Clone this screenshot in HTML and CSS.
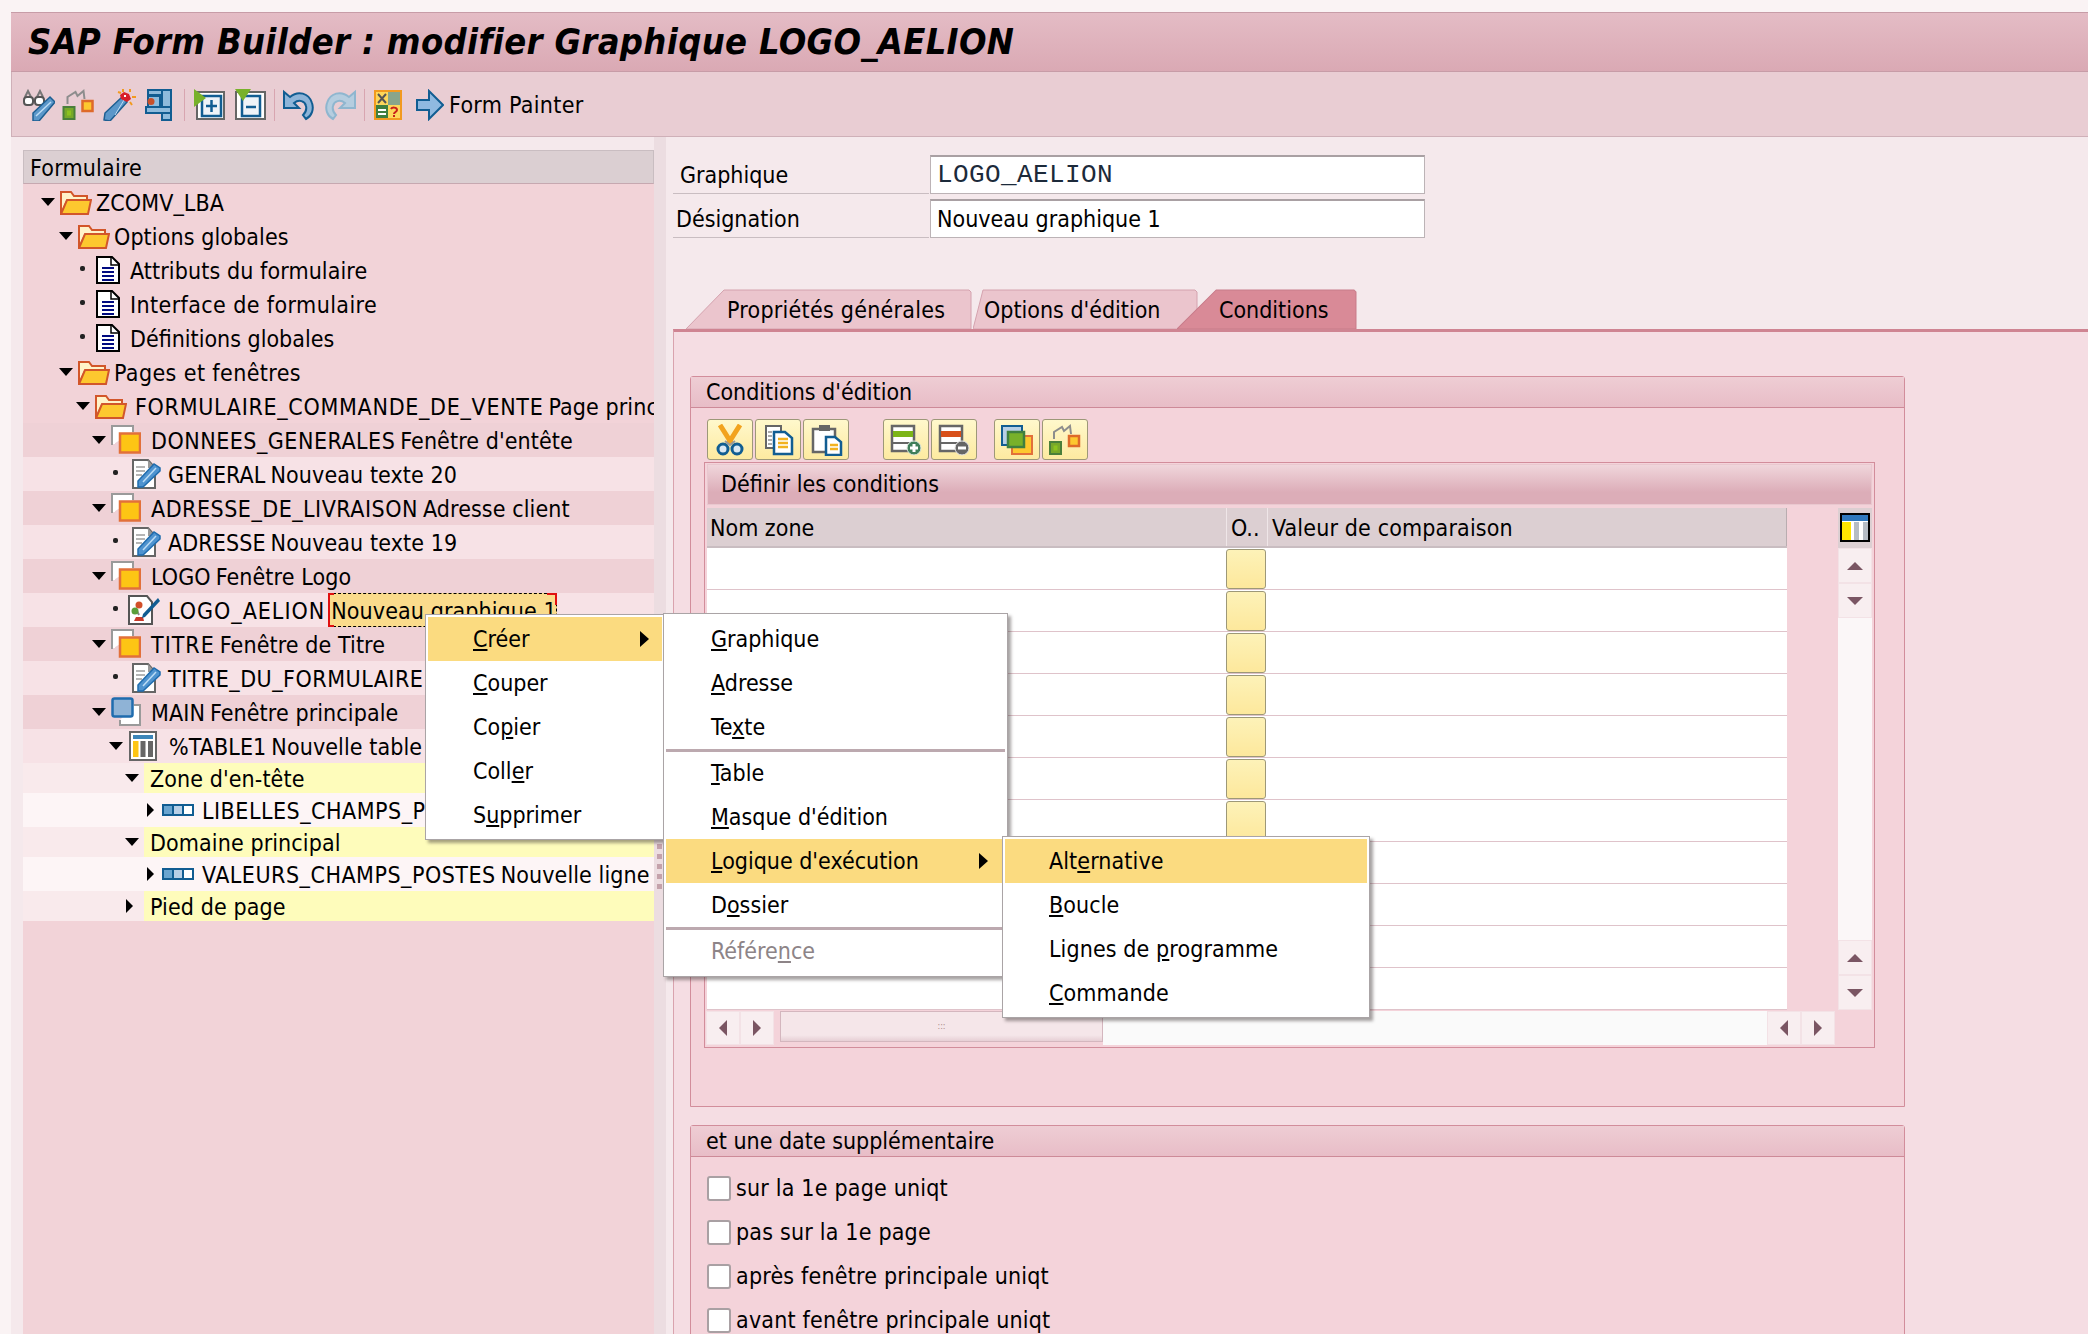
FILE: index.html
```html
<!DOCTYPE html>
<html lang="fr">
<head>
    <meta charset="UTF-8">
    <title>SAP Form Builder</title>
    <link rel="stylesheet" href="styles.css">
</head>
<body>
<svg class="defs" width="0" height="0">
    <defs>
        <symbol id="folder" viewBox="0 0 32 25">
            <path d="M1 24V2h10l3 4h13v5H7L1 24z" fill="#fff3c8" stroke="#d2562a" stroke-width="2"/>
            <path d="M1 24L7 10h24l-3 14z" fill="#fdc82f" stroke="#d2562a" stroke-width="2"/>
        </symbol>
        <symbol id="doc" viewBox="0 0 24 28">
            <path d="M1 1h15l7 7v19H1z" fill="#fff" stroke="#000" stroke-width="2"/>
            <path d="M15 1v8h8" fill="none" stroke="#000" stroke-width="1.5"/>
            <path d="M6 12h12M6 16h12M6 20h12M6 24h12" stroke="#000a80" stroke-width="2"/>
        </symbol>
        <symbol id="win" viewBox="0 0 30 30">
            <path d="M1 20V1h21v6" fill="#fff" stroke="#9a9a9a" stroke-width="2"/>
            <path d="M3 19V3h17v4" fill="none" stroke="#fff" stroke-width="2"/>
            <rect x="9" y="8.500" width="20" height="19" fill="#fdc514" stroke="#e2703a" stroke-width="2.500"/>
        </symbol>
        <symbol id="main" viewBox="0 0 30 30">
            <path d="M9 23v5h20V8h-6" fill="#fff" stroke="#9a9a9a" stroke-width="2"/>
            <rect x="1.500" y="1.500" width="20" height="18" rx="2" fill="#8fb3d6" stroke="#1f6cae" stroke-width="2.500"/>
        </symbol>
        <symbol id="pen" viewBox="0 0 29 30">
            <path d="M1 1h15l7 8v20H1z" fill="#fff" stroke="#666" stroke-width="2"/>
            <path d="M16 1v8h7z" fill="#999"/>
            <path d="M4 8h9M4 12h9M4 16h6" stroke="#b5b5b5" stroke-width="2"/>
            <path d="M6 28v-6L22 5l6 4v3L11 28z" fill="#4f93cf" stroke="#1f6cae" stroke-width="1.500"/>
            <path d="M11 23L24 9" stroke="#bcdcf5" stroke-width="1.500"/>
        </symbol>
        <symbol id="graph" viewBox="0 0 32 30">
            <path d="M1 1h18l5 6v22H1z" fill="#fff" stroke="#555" stroke-width="2"/>
            <circle cx="11" cy="10" r="3.500" fill="#d2502a"/>
            <path d="M8 14l3 6" stroke="#888" stroke-width="2"/>
            <circle cx="7" cy="16" r="3.500" fill="#5a9e3a"/>
            <path d="M6 26l2-4h7l1 4z" fill="#c83a2a"/>
            <path d="M14 23l1-4L30 3l2 3-15 16z" fill="#115d92"/>
        </symbol>
        <symbol id="table" viewBox="0 0 28 30">
            <rect x="1" y="1" width="26" height="28" fill="#fff" stroke="#666" stroke-width="2"/>
            <rect x="4" y="4" width="20" height="4" fill="#3c85b8"/>
            <rect x="4" y="10" width="5.500" height="16" fill="#fdc514"/>
            <rect x="11.500" y="10" width="5" height="16" fill="#666"/>
            <rect x="19" y="10" width="5" height="16" fill="#666"/>
        </symbol>
        <symbol id="line" viewBox="0 0 32 12">
            <rect x="1" y="1" width="30" height="10" fill="#fff" stroke="#115d92" stroke-width="2"/>
            <rect x="2" y="2" width="9" height="8" fill="#6aa5d0"/>
            <rect x="12" y="2" width="8" height="8" fill="#b8cfe6"/>
            <path d="M11 1v10M21 1v10" stroke="#115d92" stroke-width="2"/>
        </symbol>
        <symbol id="hier" viewBox="0 0 32 32">
            <rect x="1" y="18" width="11" height="12" fill="#78a82a" stroke="#4a7f3a" stroke-width="2"/>
            <rect x="4.500" y="21.500" width="4" height="5" fill="#8cc21f"/>
            <rect x="20" y="12" width="10" height="10" fill="#fdc82f" stroke="#de6a2a" stroke-width="2.500"/>
            <path d="M5 15V8l8-5 2 4 6-5 1 8" fill="none" stroke="#8d8d8d" stroke-width="2"/>
        </symbol>
    </defs>
</svg>

<div class="page">
    <div class="title">SAP Form Builder : modifier Graphique LOGO_AELION</div>

    <div class="appbar">
        <svg class="tb t33" viewBox="0 0 33 32">
            <path d="M3 8l3-6 3 6M15 8l3-6 3 6" fill="none" stroke="#777" stroke-width="2"/>
            <rect x="2" y="8" width="9" height="8" rx="3" fill="#fff" stroke="#555" stroke-width="2"/>
            <rect x="13" y="8" width="9" height="8" rx="3" fill="#fff" stroke="#555" stroke-width="2"/>
            <path d="M11 32v-8L28 8l5 5-16 19z" fill="#5b97c9" stroke="#1d5f92" stroke-width="1.500"/>
            <path d="M14 27L29 13" stroke="#bcdcf5" stroke-width="1.500"/>
        </svg>
        <svg class="tb t33 g6"><use href="#hier"/></svg>
        <svg class="tb t33 g9" viewBox="0 0 33 32">
            <path d="M1 31l1-7L19 8l5 5L7 32z" fill="#5b97c9" stroke="#1d5f92" stroke-width="1.500"/>
            <path d="M12 26L21 11" stroke="#bcdcf5" stroke-width="1"/>
            <path d="M21 3l5 2 2 5-4 3-6-3-1-4z" fill="#d8202a"/>
            <rect x="21" y="6" width="2" height="2" fill="#fff"/>
            <path d="M20 0v3M27 0v3M33 8h-4M27 13l2 3M15 3l3 1" stroke="#f29a1f" stroke-width="2"/>
        </svg>
        <svg class="tb t28 g10" viewBox="0 0 28 32">
            <rect x="3" y="1" width="23" height="5" fill="#8ebbdc" stroke="#115d92" stroke-width="2"/>
            <rect x="3" y="7" width="12" height="11" fill="#8ebbdc" stroke="#115d92" stroke-width="2"/>
            <rect x="17" y="1" width="9" height="30" fill="#8ebbdc" stroke="#115d92" stroke-width="2"/>
            <rect x="1" y="18" width="25" height="6" fill="#8ebbdc" stroke="#115d92" stroke-width="2"/>
            <circle cx="6" cy="12.500" r="3.500" fill="#c8502a"/>
        </svg>
        <span class="sep first"></span>
        <svg class="tb t31" viewBox="0 0 31 32">
            <rect x="3" y="3" width="27" height="27" fill="#fff" stroke="#666" stroke-width="2"/>
            <rect x="8" y="7" width="19" height="20" fill="#eef3f8" stroke="#115d92" stroke-width="2.500"/>
            <path d="M17.500 11v12M12 17h11" stroke="#115d92" stroke-width="2.500"/>
            <path d="M0 0l12 9-12 9z" fill="#78b12a"/>
        </svg>
        <svg class="tb t31 g10b" viewBox="0 0 31 32">
            <rect x="1" y="3" width="29" height="27" fill="#fff" stroke="#666" stroke-width="2"/>
            <rect x="7" y="7" width="18" height="20" fill="#eef3f8" stroke="#115d92" stroke-width="2.500"/>
            <path d="M11 18h10" stroke="#115d92" stroke-width="2.500"/>
            <path d="M0 0h16l-8 12z" fill="#78b12a"/>
        </svg>
        <span class="sep"></span>
        <svg class="tb t31" viewBox="0 0 31 32">
            <path d="M1 3v16h15l-5-5c5-4 11-2 12 3 1 4-1 7-3 9l3 4c6-3 8-10 6-16C26 4 15 1 7 8z" fill="#8db4d8" stroke="#115d92" stroke-width="2"/>
        </svg>
        <svg class="tb t31 g12" viewBox="0 0 31 32">
            <path d="M30 3v16H15l5-5c-5-4-11-2-12 3-1 4 1 7 3 9l-3 4C2 27 0 20 2 14 5 4 16 1 24 8z" fill="#b5cddf" stroke="#8fb6cf" stroke-width="2"/>
        </svg>
        <span class="sep"></span>
        <svg class="tb t30" viewBox="0 0 30 32">
            <rect x="1" y="1" width="28" height="30" fill="#f29a1f"/>
            <rect x="3" y="3" width="12" height="13" fill="#fdd75a"/>
            <rect x="15" y="3" width="12" height="13" fill="#88a58a"/>
            <rect x="3" y="16" width="12" height="13" fill="#3f7f3f"/>
            <rect x="15" y="16" width="12" height="13" fill="#fdd75a"/>
            <path d="M5 5l8 9M13 5l-8 9" stroke="#555" stroke-width="2"/>
            <path d="M5 21h8M5 25h8" stroke="#fff" stroke-width="2"/>
            <path d="M18 20c1-2 6-2 6 1 0 2-3 2-3 4M21 26v2" fill="none" stroke="#c8201a" stroke-width="2"/>
        </svg>
        <svg class="tb t28 g14" viewBox="0 0 28 32">
            <path d="M1 11h12V2l14 14-14 14v-9H1z" fill="#8fb9e0" stroke="#115d92" stroke-width="2"/>
        </svg>
        <span class="fp">Form Painter</span>
    </div>

    <div class="main">
        <div class="treecol">
            <div class="treehead">Formulaire</div>
            <div class="tree">
                <div class="row l0"><i class="tw down"></i><svg class="ic folder"><use href="#folder"/></svg><span>ZCOMV_LBA</span></div>
                <div class="row l1"><i class="tw down"></i><svg class="ic folder"><use href="#folder"/></svg><span>Options globales</span></div>
                <div class="row l2"><i class="tw dot"></i><svg class="ic doc"><use href="#doc"/></svg><span>Attributs du formulaire</span></div>
                <div class="row l2"><i class="tw dot"></i><svg class="ic doc"><use href="#doc"/></svg><span class="iface">Interface de formulaire</span></div>
                <div class="row l2"><i class="tw dot"></i><svg class="ic doc"><use href="#doc"/></svg><span class="defn">Définitions globales</span></div>
                <div class="row l1"><i class="tw down"></i><svg class="ic folder"><use href="#folder"/></svg><span class="iface">Pages et fenêtres</span></div>
                <div class="row l2"><i class="tw down"></i><svg class="ic folder wide"><use href="#folder"/></svg><span class="name long">FORMULAIRE_COMMANDE_DE_VENTE</span><span class="desc">Page principale</span></div>
                <div class="row l3 dark"><i class="tw down"></i><svg class="ic win"><use href="#win"/></svg><span class="name">DONNEES_GENERALES</span><span class="desc">Fenêtre d'entête</span></div>
                <div class="row l4 light"><i class="tw dot"></i><svg class="ic pen"><use href="#pen"/></svg><span>GENERAL</span><span class="desc">Nouveau texte 20</span></div>
                <div class="row l3 dark"><i class="tw down"></i><svg class="ic win"><use href="#win"/></svg><span class="name">ADRESSE_DE_LIVRAISON</span><span class="desc">Adresse client</span></div>
                <div class="row l4 light"><i class="tw dot"></i><svg class="ic pen"><use href="#pen"/></svg><span>ADRESSE</span><span class="desc">Nouveau texte 19</span></div>
                <div class="row l3 dark"><i class="tw down"></i><svg class="ic win"><use href="#win"/></svg><span>LOGO</span><span class="desc">Fenêtre Logo</span></div>
                <div class="row l4 light"><i class="tw dot"></i><svg class="ic graph"><use href="#graph"/></svg><span class="name loose">LOGO_AELION</span><span class="sel">Nouveau graphique 1</span></div>
                <div class="row l3 dark"><i class="tw down"></i><svg class="ic win"><use href="#win"/></svg><span class="name loose">TITRE</span><span class="desc">Fenêtre de Titre</span></div>
                <div class="row l4 light"><i class="tw dot"></i><svg class="ic pen"><use href="#pen"/></svg><span class="name">TITRE_DU_FORMULAIRE</span></div>
                <div class="row l3 dark"><i class="tw down"></i><svg class="ic win"><use href="#main"/></svg><span>MAIN</span><span class="desc">Fenêtre principale</span></div>
                <div class="row l4 light"><i class="tw down"></i><svg class="ic tbl"><use href="#table"/></svg><span>%TABLE1</span><span class="desc">Nouvelle table</span></div>
                <div class="row l5 zrow"><i class="tw down"></i><div class="zone">Zone d'en-tête</div></div>
                <div class="row l6 pale"><i class="tw right"></i><svg class="ic line"><use href="#line"/></svg><span class="name">LIBELLES_CHAMPS_POSTES</span></div>
                <div class="row l5 zrow"><i class="tw down"></i><div class="zone">Domaine principal</div></div>
                <div class="row l6 pale"><i class="tw right"></i><svg class="ic line"><use href="#line"/></svg><span class="name">VALEURS_CHAMPS_POSTES</span><span class="desc">Nouvelle ligne</span></div>
                <div class="row l5 zrow"><i class="tw right"></i><div class="zone">Pied de page</div></div>
            </div>
        </div>

        <div class="splitter"><div class="grip"></div></div>

        <div class="detail">
            <div class="field first">
                <label class="lab-g">Graphique</label>
                <div class="input mono">LOGO_AELION</div>
            </div>
            <div class="field">
                <label class="lab-d">Désignation</label>
                <div class="input">Nouveau graphique 1</div>
            </div>

            <div class="tabs">
                <div class="tab t1">
                    <svg viewBox="0 0 286 40" preserveAspectRatio="none"><polygon points="0,40 38,1 283,1 285,3 285,40" fill="#ebc5cd" stroke="#d4a2ae"/></svg>
                    <span>Propriétés générales</span>
                </div>
                <div class="tab t2">
                    <svg viewBox="0 0 225 40" preserveAspectRatio="none"><polygon points="0,40 10,1 222,1 224,3 224,40" fill="#ebc5cd" stroke="#d4a2ae"/></svg>
                    <span>Options d'édition</span>
                </div>
                <div class="tab t3">
                    <svg viewBox="0 0 179 40" preserveAspectRatio="none"><polygon points="0,40 39,1 176,1 178,3 178,40" fill="#d98a97" stroke="#c87c8a"/></svg>
                    <span>Conditions</span>
                </div>
            </div>

            <div class="panel">
                <div class="group g1">
                    <div class="grouphead">Conditions d'édition</div>
                    <div class="groupbody">
                        <div class="btnbar">
                            <button class="btn">
                                <svg viewBox="0 0 34 32">
                                    <path d="M7 1l12 19M27 1L15 20" stroke="#f2a31f" stroke-width="5"/>
                                    <path d="M12 17l5 4 5-4" fill="none" stroke="#9a9a9a" stroke-width="2"/>
                                    <circle cx="10" cy="25" r="5" fill="#dbe8f3" stroke="#115d92" stroke-width="3"/>
                                    <circle cx="24" cy="25" r="5" fill="#dbe8f3" stroke="#115d92" stroke-width="3"/>
                                </svg>
                            </button>
                            <button class="btn">
                                <svg viewBox="0 0 34 32">
                                    <rect x="5" y="2" width="15" height="22" fill="#fff" stroke="#666" stroke-width="2"/>
                                    <path d="M7 8h4M7 12h4M7 16h4M7 20h4" stroke="#aaa" stroke-width="2"/>
                                    <path d="M13 8h11l7 6v16H13z" fill="#fff" stroke="#115d92" stroke-width="2.500"/>
                                    <path d="M17 15h10M17 19h10M17 23h10" stroke="#f2b21f" stroke-width="2.500"/>
                                </svg>
                            </button>
                            <button class="btn">
                                <svg viewBox="0 0 34 32">
                                    <rect x="4" y="5" width="22" height="23" fill="#fff" stroke="#666" stroke-width="2.500"/>
                                    <rect x="10" y="1" width="11" height="6" fill="#666"/>
                                    <path d="M17 13h9l6 5v13H17z" fill="#fff" stroke="#115d92" stroke-width="2.500"/>
                                    <path d="M21 21h8M21 25h8" stroke="#f2b21f" stroke-width="2.500"/>
                                </svg>
                            </button>
                            <button class="btn gap">
                                <svg viewBox="0 0 34 32">
                                    <rect x="3" y="2" width="22" height="25" fill="#fff" stroke="#666" stroke-width="2.500"/>
                                    <rect x="4" y="7" width="20" height="6" fill="#7cb518"/>
                                    <path d="M4 19h20" stroke="#666" stroke-width="2"/>
                                    <circle cx="25" cy="24" r="7" fill="#3f7f5a" stroke="#dfe8df" stroke-width="1"/>
                                    <path d="M25 20v8M21 24h8" stroke="#fff" stroke-width="3"/>
                                </svg>
                            </button>
                            <button class="btn">
                                <svg viewBox="0 0 34 32">
                                    <rect x="3" y="2" width="22" height="25" fill="#fff" stroke="#666" stroke-width="2.500"/>
                                    <rect x="4" y="7" width="20" height="6" fill="#d8501a"/>
                                    <path d="M4 19h20" stroke="#666" stroke-width="2"/>
                                    <circle cx="25" cy="24" r="7" fill="#666" stroke="#e6e6e6" stroke-width="1"/>
                                    <path d="M21 24h8" stroke="#fff" stroke-width="3"/>
                                </svg>
                            </button>
                            <button class="btn gap">
                                <svg viewBox="0 0 34 32">
                                    <rect x="2" y="2" width="20" height="19" fill="#b7cfe6" stroke="#115d92" stroke-width="2"/>
                                    <rect x="12" y="12" width="20" height="18" fill="#fdc82f" stroke="#e2703a" stroke-width="2"/>
                                    <rect x="8" y="8" width="16" height="15" fill="#78b12a" stroke="#3f7f3f" stroke-width="2.500"/>
                                </svg>
                            </button>
                            <button class="btn">
                                <svg viewBox="0 0 34 32"><use href="#hier"/></svg>
                            </button>
                        </div>

                        <div class="tc">
                            <div class="tctitle">Définir les conditions</div>
                            <div class="tcbody">
                                <div class="grid">
                                    <div class="gridhead">
                                        <div class="c1">Nom zone</div>
                                        <div class="c2">O..</div>
                                        <div class="c3">Valeur de comparaison</div>
                                    </div>
                                    <div class="gridrow"><div class="c1"></div><div class="c2"><b></b></div><div class="c3"></div></div>
                                    <div class="gridrow"><div class="c1"></div><div class="c2"><b></b></div><div class="c3"></div></div>
                                    <div class="gridrow"><div class="c1"></div><div class="c2"><b></b></div><div class="c3"></div></div>
                                    <div class="gridrow"><div class="c1"></div><div class="c2"><b></b></div><div class="c3"></div></div>
                                    <div class="gridrow"><div class="c1"></div><div class="c2"><b></b></div><div class="c3"></div></div>
                                    <div class="gridrow"><div class="c1"></div><div class="c2"><b></b></div><div class="c3"></div></div>
                                    <div class="gridrow"><div class="c1"></div><div class="c2"><b></b></div><div class="c3"></div></div>
                                    <div class="gridrow"><div class="c1"></div><div class="c2"></div><div class="c3"></div></div>
                                    <div class="gridrow"><div class="c1"></div><div class="c2"></div><div class="c3"></div></div>
                                    <div class="gridrow"><div class="c1"></div><div class="c2"></div><div class="c3"></div></div>
                                    <div class="gridrow"><div class="c1"></div><div class="c2"></div><div class="c3"></div></div>
                                </div>
                                <div class="vbar">
                                    <div class="colbtn">
                                        <svg viewBox="0 0 30 29">
                                            <rect x="1" y="1" width="28" height="27" fill="#fff" stroke="#000" stroke-width="2"/>
                                            <rect x="2" y="2" width="26" height="6" fill="#2f78bd"/>
                                            <rect x="2" y="9" width="9" height="18" fill="#ffe600"/>
                                            <rect x="14" y="9" width="5" height="18" fill="#b5bcc4"/>
                                            <rect x="23" y="9" width="5" height="18" fill="#b5bcc4"/>
                                        </svg>
                                    </div>
                                    <div class="sb"><i class="up"></i></div>
                                    <div class="sb"><i class="dn"></i></div>
                                    <div class="track"></div>
                                    <div class="sb"><i class="up"></i></div>
                                    <div class="sb"><i class="dn"></i></div>
                                </div>
                            </div>
                            <div class="hbar">
                                <div class="sb"><i class="lf"></i></div>
                                <div class="sb"><i class="rt"></i></div>
                                <div class="hthumb">:::</div>
                                <div class="htrack"></div>
                                <div class="sb"><i class="lf"></i></div>
                                <div class="sb"><i class="rt"></i></div>
                            </div>
                        </div>
                    </div>
                </div>

                <div class="group g2">
                    <div class="grouphead">et une date supplémentaire</div>
                    <div class="checks">
                        <div class="check"><i></i>sur la 1e page uniqt</div>
                        <div class="check"><i></i>pas sur la 1e page</div>
                        <div class="check"><i></i>après fenêtre principale uniqt</div>
                        <div class="check"><i></i>avant fenêtre principale uniqt</div>
                    </div>
                </div>
            </div>
        </div>
    </div>

    <!-- context menus -->
    <div class="menu m1">
        <div class="mi on"><span><u>C</u>réer</span><i class="more"></i></div>
        <div class="mi"><span><u>C</u>ouper</span></div>
        <div class="mi"><span>Co<u>p</u>ier</span></div>
        <div class="mi"><span>Coll<u>e</u>r</span></div>
        <div class="mi"><span>S<u>u</u>pprimer</span></div>
    </div>
    <div class="menu m2">
        <div class="mi"><span><u>G</u>raphique</span></div>
        <div class="mi"><span><u>A</u>dresse</span></div>
        <div class="mi"><span>Te<u>x</u>te</span></div>
        <div class="msep"></div>
        <div class="mi"><span><u>T</u>able</span></div>
        <div class="mi"><span><u>M</u>asque d'édition</span></div>
        <div class="mi on"><span><u>L</u>ogique d'exécution</span><i class="more"></i></div>
        <div class="mi"><span>D<u>o</u>ssier</span></div>
        <div class="msep"></div>
        <div class="mi off"><span>Référe<u>n</u>ce</span></div>
    </div>
    <div class="menu m3">
        <div class="mi on"><span>Alt<u>e</u>rnative</span></div>
        <div class="mi"><span><u>B</u>oucle</span></div>
        <div class="mi"><span>Lignes de <u>p</u>rogramme</span></div>
        <div class="mi"><span><u>C</u>ommande</span></div>
    </div>
</div>
</body>
</html>
```
FILE: styles.css
```css
html, body {
    margin: 0;
    height: 100%;
    overflow: hidden;
}
body {
    background-color: #faf3f4;
    font-family: "DejaVu Sans Condensed", "DejaVu Sans", sans-serif;
    font-size: 23px;
    color: #000;
}
.defs {
    position: absolute;
}
.page {
    position: relative;
    height: 1322px;
    padding: 12px 0 0 11px;
    overflow: hidden;
}

/* title and application toolbar */
.title {
    height: 58px;
    line-height: 58px;
    padding-left: 17px;
    background: linear-gradient(#e4bcc5, #daa9b4);
    border-top: 1px solid #c79ca7;
    border-bottom: 1px solid #c79ca7;
    font-family: "DejaVu Sans Condensed", "DejaVu Sans", sans-serif;
    font-weight: 700;
    font-style: italic;
    font-size: 36px;
    letter-spacing: 0.33px;
    white-space: nowrap;
}
.appbar {
    height: 63px;
    display: flex;
    align-items: center;
    padding: 1px 0 0 10px;
    background-color: #e9cdd3;
    border-bottom: 1px solid #cfb0b8;
    border-left: 1px solid #cfb0b8;
}
.tb {
    height: 32px;
    flex: none;
}
.t33 { width: 33px; }
.t31 { width: 31px; }
.t30 { width: 30px; }
.t28 { width: 28px; }
.g6 { margin-left: 7px; }
.g9 { margin-left: 8px; }
.g10 { margin-left: 9px; }
.g10b { margin-left: 10px; }
.g12 { margin-left: 11px; }
.g14 { margin-left: 13px; }
.sep {
    width: 1px;
    height: 32px;
    margin: 0 8px;
    background-color: #d8a5b0;
}
.sep.first {
    margin: 0 9px 0 11px;
}
.fp {
    margin-left: 5px;
    letter-spacing: 0.3px;
    white-space: nowrap;
}

.main {
    display: flex;
    height: 1197px;
    background-color: #f5e9ec;
}

/* tree */
.treecol {
    width: 631px;
    margin: 13px 0 0 12px;
    background-color: #f2d3d8;
    overflow: hidden;
    flex: none;
}
.treehead {
    height: 32px;
    line-height: 34px;
    padding-left: 6px;
    letter-spacing: 0.2px;
    background-color: #dbcfd2;
    border: 1px solid #c9bdc1;
    border-bottom-color: #c6a8b0;
}
.tree {
    padding-top: 1px;
    letter-spacing: 0.1px;
}
.row {
    height: 34px;
    display: flex;
    align-items: center;
    white-space: nowrap;
}
.row > span {
    padding-top: 2px;
}
.row .name {
    letter-spacing: 0.5px;
}
.row .name.long {
    letter-spacing: 0.7px;
}
.row .name.loose {
    letter-spacing: 1px;
}
.row .iface {
    letter-spacing: 0.4px;
}
.row .defn {
    letter-spacing: 0;
}
.l0 { padding-left: 18px; }
.l1 { padding-left: 36px; }
.l2 { padding-left: 53px; }
.l3 { padding-left: 69px; }
.l4 { padding-left: 86px; }
.l5 { padding-left: 102px; }
.l6 { padding-left: 123px; }
.dark { background-color: #efd1d6; }
.light { background-color: #f7e2e6; }
.pale { background-color: #fdf5f6; }
.zrow {
    height: 30px;
    background-color: #f9eaec;
}
.zone {
    flex: 1;
    height: 100%;
    line-height: 32px;
    padding-left: 6px;
    background-color: #fefcbb;
}
.desc {
    margin-left: 5px;
}
.row > .sel {
    position: relative;
    align-self: stretch;
    width: 225px;
    margin-left: 3px;
    padding: 0 0 0 2px;
    line-height: 34px;
    background-color: #fadb8c;
    border: 1px dashed #000;
}
.sel::before {
    content: "";
    position: absolute;
    left: -1px;
    top: -1px;
    bottom: -1px;
    width: 6px;
    border-left: 2px solid #e01010;
    border-top: 2px solid #e01010;
    border-bottom: 2px solid #e01010;
    box-sizing: border-box;
}
.sel::after {
    content: "";
    position: absolute;
    right: -1px;
    top: -1px;
    width: 10px;
    height: 12px;
    border-right: 2px solid #e01010;
    border-top: 2px solid #e01010;
    box-sizing: border-box;
}

/* twisties */
.tw {
    width: 19px;
    height: 20px;
    flex: none;
    position: relative;
}
.zrow .tw {
    width: 16px;
    padding-right: 3px;
}
.tw.down::before {
    content: "";
    position: absolute;
    top: 6px;
    left: 0;
    border-left: 7px solid transparent;
    border-right: 7px solid transparent;
    border-top: 8px solid #000;
}
.tw.right::before {
    content: "";
    position: absolute;
    top: 3px;
    left: 1px;
    border-top: 7px solid transparent;
    border-bottom: 7px solid transparent;
    border-left: 7px solid #000;
}
.tw.dot::before {
    content: "";
    position: absolute;
    top: 6px;
    left: 4px;
    width: 5px;
    height: 5px;
    border-radius: 2px;
    background-color: #222;
}
.ic {
    flex: none;
}
.folder {
    width: 32px;
    height: 25px;
    margin-right: 4px;
}
.folder.wide {
    margin-right: 8px;
}
.doc {
    width: 24px;
    height: 28px;
    margin-left: 1px;
    margin-right: 10px;
}
.win {
    width: 30px;
    height: 30px;
    margin-right: 10px;
}
.pen {
    width: 29px;
    height: 30px;
    margin-left: 4px;
    margin-right: 7px;
}
.graph {
    width: 32px;
    height: 30px;
    margin-right: 8px;
}
.tbl {
    width: 28px;
    height: 30px;
    margin-left: 1px;
    margin-right: 12px;
}
.line {
    width: 32px;
    height: 12px;
    margin-left: -3px;
    margin-right: 8px;
}

/* splitter */
.splitter {
    width: 12px;
    flex: none;
    background-color: #ecdde1;
    position: relative;
}
.grip {
    position: absolute;
    left: 3px;
    top: 697px;
    width: 5px;
    height: 56px;
    background: repeating-linear-gradient(#c4a2ab 0 5px, transparent 5px 10px);
}

/* right side */
.detail {
    flex: 1;
    min-width: 0;
}
.field {
    display: flex;
    height: 39px;
    margin-top: 5px;
    padding-left: 7px;
}
.field.first {
    margin-top: 18px;
}
.field label {
    width: 256px;
    padding-top: 2px;
    line-height: 37px;
    border-bottom: 1px solid #c9bdc1;
    flex: none;
    box-sizing: border-box;
}
.lab-g { padding-left: 7px; }
.lab-d { padding-left: 3px; }
.input {
    width: 495px;
    margin-left: 1px;
    padding: 1px 0 0 6px;
    line-height: 35px;
    background-color: #fff;
    border: 1px solid #bcb3b6;
    border-top: 2px solid #a9a0a3;
    box-sizing: border-box;
}
.mono {
    font-family: "Liberation Mono", monospace;
    font-size: 26px;
    letter-spacing: 0.4px;
    color: #1c2a3a;
}
.tabs {
    display: flex;
    height: 40px;
    margin: 51px 0 0 20px;
}
.tab {
    position: relative;
    height: 40px;
    line-height: 42px;
    flex: none;
    white-space: nowrap;
}
.tab svg {
    position: absolute;
    left: 0;
    top: 0;
    width: 100%;
    height: 100%;
}
.tab span {
    position: relative;
}
.t1 { width: 286px; padding-left: 41px; box-sizing: border-box; margin-right: 1px; letter-spacing: 0.25px; }
.t2 { width: 225px; padding-left: 11px; box-sizing: border-box; }
.t3 { width: 180px; padding-left: 42px; box-sizing: border-box; margin-left: -21px; }
.panel {
    margin-left: 7px;
    padding: 44px 0 0 16px;
    height: 1100px;
    background-color: #f5dde3;
    border-top: 3px solid #cf8492;
    border-left: 1px solid #d9a3ae;
}
.group {
    width: 1215px;
    box-sizing: border-box;
    background-color: #f4d3da;
    border: 1px solid #d28d9b;
    border-radius: 3px 3px 0 0;
}
.g1 {
    height: 731px;
}
.g2 {
    margin-top: 18px;
    height: 400px;
}
.grouphead {
    height: 30px;
    line-height: 31px;
    padding-left: 15px;
    background: linear-gradient(#eecdd4, #e8bdc7);
    border-bottom: 1px solid #cd8a98;
}
.groupbody {
    padding: 11px 0 0 16px;
}
.btnbar {
    display: flex;
    gap: 2px;
    height: 41px;
    margin-bottom: 2px;
}
.btn {
    width: 46px;
    height: 41px;
    padding: 4px 5px;
    background: linear-gradient(#fff8cc, #fdeaa0);
    border: 1px solid #9d9878;
    border-radius: 3px;
}
.btn svg {
    display: block;
    width: 34px;
    height: 32px;
}
.btn.gap {
    margin-left: 32px;
}
.btn:nth-child(6) {
    margin-left: 15px;
}

/* table control */
.tc {
    width: 1171px;
    height: 586px;
    margin-left: -3px;
    padding: 1px 2px;
    box-sizing: border-box;
    border: 1px solid #d28d9b;
}
.tctitle {
    height: 41px;
    line-height: 38px;
    padding-left: 13px;
    background: linear-gradient(#f0d6db, #dcadb8 70%);
    border: 1px solid #e9c8cf;
    box-sizing: border-box;
}
.tcbody {
    display: flex;
    justify-content: space-between;
    margin-top: 3px;
}
.grid {
    width: 1080px;
}
.gridhead {
    display: flex;
    height: 40px;
    line-height: 40px;
    background-color: #dccfd2;
    border-bottom: 2px solid #c9bdc1;
    box-sizing: border-box;
    box-shadow: inset -1px 0 #b9adb0;
}
.gridhead .c1 { padding-left: 3px; }
.gridhead .c2 { padding-left: 4px; border-left: 1px solid #efe6e8; }
.gridhead .c3 { padding-left: 4px; letter-spacing: 0.15px; border-left: 1px solid #efe6e8; }
.c1 {
    width: 519px;
    flex: none;
    box-sizing: border-box;
}
.c2 {
    width: 41px;
    flex: none;
    box-sizing: border-box;
}
.c3 {
    flex: 1;
}
.gridrow {
    display: flex;
    height: 42px;
    box-sizing: border-box;
    background-color: #fff;
    border-bottom: 1px solid #dfc3ca;
}
.gridrow b {
    display: block;
    width: 40px;
    height: 40px;
    margin-top: 1px;
    background: linear-gradient(#fdf2b8, #fde89c);
    border: 1px solid #9d9878;
    border-radius: 3px;
    box-sizing: border-box;
}
.vbar {
    width: 34px;
    display: flex;
    flex-direction: column;
}
.colbtn {
    height: 40px;
    background-color: #dccfd2;
    padding: 5px 2px 0;
    box-sizing: border-box;
}
.colbtn svg {
    display: block;
    width: 30px;
    height: 29px;
}
.sb {
    width: 34px;
    height: 34px;
    flex: none;
    display: flex;
    align-items: center;
    justify-content: center;
    background-color: #f8eef0;
    border: 1px solid #f3e2e6;
    box-sizing: border-box;
}
.vbar .sb {
    height: 35px;
}
.sb i {
    width: 0;
    height: 0;
}
.up {
    border-left: 8px solid transparent;
    border-right: 8px solid transparent;
    border-bottom: 8px solid #7a5563;
}
.dn {
    border-left: 8px solid transparent;
    border-right: 8px solid transparent;
    border-top: 8px solid #7a5563;
}
.lf {
    border-top: 8px solid transparent;
    border-bottom: 8px solid transparent;
    border-right: 8px solid #7a5563;
}
.rt {
    border-top: 8px solid transparent;
    border-bottom: 8px solid transparent;
    border-left: 8px solid #7a5563;
}
.track {
    height: 322px;
    flex: none;
    background-color: #fbf7f8;
}
.hbar {
    display: flex;
    height: 34px;
    margin-top: 1px;
    margin-left: -1px;
    width: 1129px;
}
.hthumb {
    width: 323px;
    margin-left: 6px;
    height: 31px;
    line-height: 28px;
    text-align: center;
    font-size: 9px;
    color: #a88;
    background: linear-gradient(#f5e6e9 80%, #e6cfd5);
    border: 1px solid #d4b6be;
    box-sizing: border-box;
    flex: none;
}
.htrack {
    flex: 1;
    background-color: #fafafa;
}

.checks {
    padding: 19px 0 0 16px;
    letter-spacing: 0.2px;
}
.check {
    display: flex;
    align-items: center;
    height: 24px;
    margin-bottom: 20px;
    white-space: nowrap;
}
.check i {
    width: 24px;
    height: 25px;
    margin-right: 5px;
    background-color: #fff;
    border: 2px solid #a9a0a3;
    border-radius: 3px;
    box-sizing: border-box;
    flex: none;
}

/* context menus */
.menu {
    position: absolute;
    background-color: #fff;
    border: 1px solid #aaa4a6;
    padding: 2px;
    box-sizing: border-box;
    box-shadow: 3px 3px 3px rgba(60, 50, 50, 0.45);
}
.m1 { left: 425px; top: 614px; width: 240px; height: 226px; }
.m2 { left: 663px; top: 613px; width: 345px; height: 364px; padding-top: 3px; }
.m3 { left: 1002px; top: 836px; width: 368px; height: 182px; }
.mi {
    position: relative;
    height: 44px;
    line-height: 44px;
    white-space: nowrap;
}
.m1 .mi span { margin-left: 45px; }
.m2 .mi span { margin-left: 45px; }
.m3 .mi span { margin-left: 44px; letter-spacing: 0.1px; }
.mi.on {
    background-color: #fbdb80;
}
.mi.off {
    color: #8d8487;
}
.msep {
    height: 3px;
    margin-bottom: -1px;
    background-color: #bca9af;
}
.more {
    position: absolute;
    right: 13px;
    top: 14px;
    border-top: 8px solid transparent;
    border-bottom: 8px solid transparent;
    border-left: 9px solid #000;
}
.m2 .more { right: 17px; }
```
